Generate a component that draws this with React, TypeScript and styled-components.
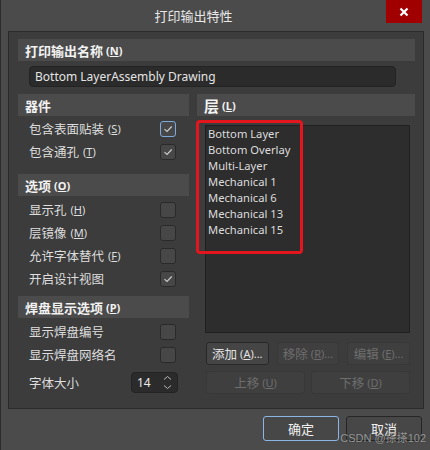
import React from "react";
import styled, { createGlobalStyle } from "styled-components";

const Global = createGlobalStyle`
  html, body { margin: 0; padding: 0; background: #4b4b4b; }
  body { font-family: "Noto Sans", "Noto Sans CJK SC", sans-serif; }
  * { box-sizing: border-box; }
`;

const Window = styled.div`
  position: relative;
  width: 430px;
  height: 450px;
  background: #4b4b4b;
  border-left: 1px solid #2c2c2c;
  display: flex;
  flex-direction: column;
  overflow: hidden;
`;

const TitleBar = styled.div`
  height: 31px;
  display: flex;
  align-items: flex-start;
`;

const Title = styled.div`
  flex: 1;
  height: 31px;
  line-height: 31px;
  text-align: center;
  color: #e8e8e8;
  font-size: 13px;
  font-family: "Noto Sans CJK SC", sans-serif;
`;

const CloseButton = styled.div`
  width: 36px;
  height: 23px;
  margin-right: 8px;
  background: #a10000;
  display: flex;
  align-items: center;
  justify-content: center;
`;

const Panel = styled.div`
  margin: 0 6px 0 7px;
  height: 378px;
  background: #3c3c3c;
  border: 1px solid #2b2b2b;
  padding: 7px 8px 0 9px;
  display: flex;
  flex-direction: column;
`;

const SectionHeader = styled.div<{ $mt?: number }>`
  height: 22px;
  margin-top: ${(p) => p.$mt ?? 0}px;
  background: #4b4b4b;
  padding-left: 7px;
  display: flex;
  align-items: center;
  gap: 3px;
  color: #f2f2f2;
  font-weight: 700;
  font-size: 13px;
  font-family: "Noto Sans CJK SC", sans-serif;
`;

const BigGlyph = styled.span`
  font-size: 15px;
  font-weight: 700;
`;

const Mn = styled.span<{ $bold?: boolean }>`
  font-size: 11px;
  font-family: "Noto Sans", sans-serif;
  font-weight: ${(p) => (p.$bold ? 700 : 400)};
  color: inherit;
  & u { text-decoration: underline; text-underline-offset: 1px; }
`;

const NameInput = styled.div`
  margin: 5px 19px 0 11px;
  height: 21px;
  background: #2b2b2b;
  border: 1px solid #232323;
  border-radius: 4px;
  padding-left: 5px;
  display: flex;
  align-items: center;
  color: #e4e4e4;
  font-size: 12px;
  font-family: "Noto Sans", sans-serif;
`;

const Columns = styled.div`
  margin-top: 7px;
  display: grid;
  grid-template-columns: 171px 1fr;
  column-gap: 8px;
`;

const Column = styled.div`
  position: relative;
  display: flex;
  flex-direction: column;
`;

const Rows = styled.div<{ $pt: number }>`
  padding-top: ${(p) => p.$pt}px;
  display: flex;
  flex-direction: column;
`;

const Row = styled.div<{ $h?: number; $mt?: number }>`
  height: ${(p) => p.$h ?? 23}px;
  margin-top: ${(p) => p.$mt ?? 0}px;
  padding: 0 13px 0 11px;
  display: flex;
  align-items: center;
  justify-content: space-between;
  color: #dedede;
  font-size: 12.5px;
  font-family: "Noto Sans CJK SC", sans-serif;
`;

const Label = styled.span`
  display: flex;
  align-items: center;
  gap: 4px;
`;

const Box = styled.div<{ $focus?: boolean }>`
  width: 16px;
  height: 16px;
  border-radius: 3px;
  background: #474747;
  border: 1px solid ${(p) => (p.$focus ? "#7ea9dc" : "#2a2a2a")};
  display: flex;
  align-items: center;
  justify-content: center;
`;

const Spinner = styled.div`
  width: 47px;
  height: 21px;
  margin-right: -2px;
  background: #2b2b2b;
  border: 1px solid #232323;
  border-radius: 4px;
  display: flex;
  align-items: center;
  justify-content: space-between;
  padding: 0 5px;
  color: #eaeaea;
  font-size: 12px;
  font-family: "Noto Sans", sans-serif;
`;

const ListBox = styled.div`
  margin: 9px 5px 0 8px;
  height: 208px;
  background: #2d2d2d;
  border: 1px solid #202020;
  padding: 0 0 0 2px;
  display: flex;
  flex-direction: column;
`;

const ListItem = styled.div`
  height: 16px;
  line-height: 16px;
  color: #dcdcdc;
  font-size: 11.2px;
  font-family: "Noto Sans", sans-serif;
`;

const Highlight = styled.div`
  position: absolute;
  left: -1px;
  top: 26px;
  width: 107px;
  height: 134px;
  border: 3px solid #e3161e;
  border-radius: 4px;
  pointer-events: none;
`;

const ButtonGrid = styled.div<{ $cols: number; $gap: number; $mt: number }>`
  margin: ${(p) => p.$mt}px 5px 0 9px;
  display: grid;
  grid-template-columns: repeat(${(p) => p.$cols}, 1fr);
  column-gap: ${(p) => p.$gap}px;
`;

const Btn = styled.div<{ $disabled?: boolean }>`
  height: 23px;
  border-radius: 3px;
  background: ${(p) => (p.$disabled ? "#3f3f3f" : "#454545")};
  border: 1px solid ${(p) => (p.$disabled ? "#383838" : "#282828")};
  color: ${(p) => (p.$disabled ? "#6e6e6e" : "#e2e2e2")};
  display: flex;
  align-items: center;
  justify-content: center;
  gap: 3px;
  font-size: 12.5px;
  font-family: "Noto Sans CJK SC", sans-serif;
`;

const Footer = styled.div`
  margin-top: 7px;
  padding-right: 8px;
  display: flex;
  justify-content: flex-end;
  gap: 7px;
`;

const DialogBtn = styled.div<{ $primary?: boolean }>`
  width: 76px;
  height: 25px;
  border-radius: 3px;
  background: #474747;
  border: 1px solid ${(p) => (p.$primary ? "#8bb6e6" : "#262626")};
  color: #f0f0f0;
  display: flex;
  align-items: center;
  justify-content: center;
  font-size: 13px;
  font-family: "Noto Sans CJK SC", sans-serif;
`;

const Watermark = styled.div`
  position: absolute;
  right: 4px;
  bottom: 5px;
  color: rgba(225, 225, 225, 0.62);
  font-size: 11px;
  font-family: "Liberation Sans", "Noto Sans CJK SC", sans-serif;
  text-shadow: 0 0 1px rgba(0, 0, 0, 0.6);
  pointer-events: none;
`;

const Check = () => (
  <svg width="10" height="8" viewBox="0 0 10 8">
    <path d="M1.5 4.2 L4 6.5 L8.7 1.5" fill="none" stroke="#cfcfcf" strokeWidth="1.1" />
  </svg>
);

const CheckBox = ({ checked, focus }: { checked?: boolean; focus?: boolean }) => (
  <Box $focus={focus}>{checked && <Check />}</Box>
);

const M = ({ k, bold }: { k: string; bold?: boolean }) => (
  <Mn $bold={bold}>
    (<u>{k}</u>)
  </Mn>
);

const layers = [
  "Bottom Layer",
  "Bottom Overlay",
  "Multi-Layer",
  "Mechanical 1",
  "Mechanical 6",
  "Mechanical 13",
  "Mechanical 15",
];

export default function App() {
  return (
    <>
      <Global />
      <Window>
        <TitleBar>
          <Title>打印输出特性</Title>
          <CloseButton>
            <svg width="10" height="10" viewBox="0 0 10 10">
              <path d="M1.5 1.5 L8.5 8.5 M8.5 1.5 L1.5 8.5" stroke="#ffffff" strokeWidth="2.2" />
            </svg>
          </CloseButton>
        </TitleBar>
        <Panel>
          <SectionHeader>
            打印输出名称 <M k="N" bold />
          </SectionHeader>
          <NameInput>Bottom LayerAssembly Drawing</NameInput>
          <Columns>
            <Column>
              <SectionHeader>器件</SectionHeader>
              <Rows $pt={1}>
                <Row>
                  <Label>
                    包含表面贴装 <M k="S" />
                  </Label>
                  <CheckBox checked focus />
                </Row>
                <Row>
                  <Label>
                    包含通孔 <M k="T" />
                  </Label>
                  <CheckBox checked />
                </Row>
              </Rows>
              <SectionHeader $mt={11}>
                选项 <M k="O" bold />
              </SectionHeader>
              <Rows $pt={2}>
                <Row>
                  <Label>
                    显示孔 <M k="H" />
                  </Label>
                  <CheckBox />
                </Row>
                <Row>
                  <Label>
                    层镜像 <M k="M" />
                  </Label>
                  <CheckBox />
                </Row>
                <Row>
                  <Label>
                    允许字体替代 <M k="F" />
                  </Label>
                  <CheckBox />
                </Row>
                <Row>
                  <Label>开启设计视图</Label>
                  <CheckBox checked />
                </Row>
              </Rows>
              <SectionHeader $mt={6}>
                焊盘显示选项 <M k="P" bold />
              </SectionHeader>
              <Rows $pt={2}>
                <Row>
                  <Label>显示焊盘编号</Label>
                  <CheckBox />
                </Row>
                <Row>
                  <Label>显示焊盘网络名</Label>
                  <CheckBox />
                </Row>
                <Row $mt={6} $h={21}>
                  <Label>字体大小</Label>
                  <Spinner>
                    <span>14</span>
                    <svg width="9" height="15" viewBox="0 0 9 15">
                      <path d="M1 4.5 L4.5 1.5 L8 4.5 M1 10.5 L4.5 13.5 L8 10.5" fill="none" stroke="#b8b8b8" strokeWidth="1" />
                    </svg>
                  </Spinner>
                </Row>
              </Rows>
            </Column>
            <Column>
              <SectionHeader>
                <BigGlyph>层</BigGlyph>
                <M k="L" bold />
              </SectionHeader>
              <ListBox>
                {layers.map((l) => (
                  <ListItem key={l}>{l}</ListItem>
                ))}
              </ListBox>
              <Highlight />
              <ButtonGrid $cols={3} $gap={8} $mt={9}>
                <Btn>
                  添加 <Mn>(<u>A</u>)...</Mn>
                </Btn>
                <Btn $disabled>
                  移除 <Mn>(<u>R</u>)...</Mn>
                </Btn>
                <Btn $disabled>
                  编辑 <Mn>(<u>E</u>)...</Mn>
                </Btn>
              </ButtonGrid>
              <ButtonGrid $cols={2} $gap={6} $mt={6}>
                <Btn $disabled>
                  上移 <M k="U" />
                </Btn>
                <Btn $disabled>
                  下移 <M k="D" />
                </Btn>
              </ButtonGrid>
            </Column>
          </Columns>
        </Panel>
        <Footer>
          <DialogBtn $primary>确定</DialogBtn>
          <DialogBtn>取消</DialogBtn>
        </Footer>
        <Watermark>CSDN @搽搽102</Watermark>
      </Window>
    </>
  );
}
